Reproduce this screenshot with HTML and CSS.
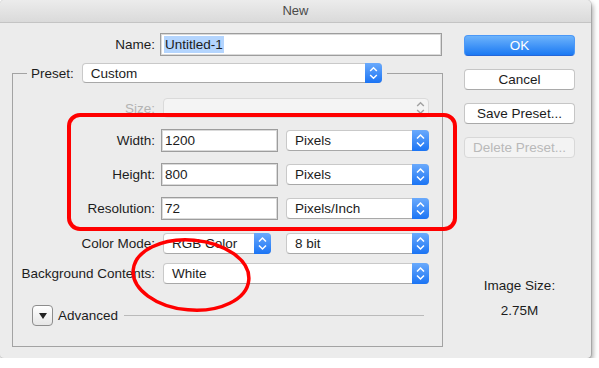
FILE: index.html
```html
<!DOCTYPE html>
<html lang="en">
<head>
  <meta charset="UTF-8">
  <title>New</title>
  <link rel="stylesheet" href="styles.css">
</head>
<body>

  <svg class="defs" width="0" height="0">
    <symbol id="chevrons" viewBox="0 0 16 21">
      <path d="M4.5 8.5 L8 5 L11.5 8.5" fill="none" stroke-width="1.5"/>
      <path d="M4.5 12.5 L8 16 L11.5 12.5" fill="none" stroke-width="1.5"/>
    </symbol>
  </svg>

  <div class="window">
    <div class="titlebar">New</div>

    <div class="content">
      <div class="main">
        <div class="name-row">
          <span class="label">Name:</span>
          <div class="field name-field"><span class="selected">Untitled-1</span></div>
        </div>

        <fieldset class="group">
          <legend>
            <div class="legend-inner">
              <span class="legend-label">Preset:</span>
              <div class="popup preset">
                <span class="text">Custom</span>
                <span class="stepper"><svg><use href="#chevrons"/></svg></span>
              </div>
            </div>
          </legend>

          <div class="row row-size">
            <span class="label disabled">Size:</span>
            <div class="popup long off">
              <span class="text"></span>
              <span class="stepper"><svg><use href="#chevrons"/></svg></span>
            </div>
          </div>

          <div class="row row-dim">
            <span class="label">Width:</span>
            <div class="field num">1200</div>
            <div class="popup unit">
              <span class="text">Pixels</span>
              <span class="stepper"><svg><use href="#chevrons"/></svg></span>
            </div>
          </div>

          <div class="row row-dim">
            <span class="label">Height:</span>
            <div class="field num">800</div>
            <div class="popup unit">
              <span class="text">Pixels</span>
              <span class="stepper"><svg><use href="#chevrons"/></svg></span>
            </div>
          </div>

          <div class="row row-dim">
            <span class="label">Resolution:</span>
            <div class="field num">72</div>
            <div class="popup unit">
              <span class="text">Pixels/Inch</span>
              <span class="stepper"><svg><use href="#chevrons"/></svg></span>
            </div>
          </div>

          <div class="row row-mode">
            <span class="label">Color Mode:</span>
            <div class="popup mode">
              <span class="text">RGB Color</span>
              <span class="stepper"><svg><use href="#chevrons"/></svg></span>
            </div>
            <div class="popup unit">
              <span class="text">8 bit</span>
              <span class="stepper"><svg><use href="#chevrons"/></svg></span>
            </div>
          </div>

          <div class="row row-bg">
            <span class="label">Background Contents:</span>
            <div class="popup long">
              <span class="text">White</span>
              <span class="stepper"><svg><use href="#chevrons"/></svg></span>
            </div>
          </div>

          <div class="row row-adv">
            <span class="disclosure"><span class="triangle"></span></span>
            <span class="adv-label">Advanced</span>
            <span class="rule"></span>
          </div>
        </fieldset>
      </div>

      <div class="side">
        <button class="btn default">OK</button>
        <button class="btn">Cancel</button>
        <button class="btn">Save Preset...</button>
        <button class="btn" disabled>Delete Preset...</button>
        <p class="size-title">Image Size:</p>
        <p class="size-value">2.75M</p>
      </div>
    </div>

    <!-- red markup drawn over the dialog -->
    <div class="mark-box"></div>
    <svg class="mark-ellipse" width="130" height="82" viewBox="0 0 130 82">
      <ellipse cx="64" cy="40" rx="58" ry="35" transform="rotate(5 64 40)"/>
    </svg>
  </div>

</body>
</html>
```

FILE: styles.css
```css
* {
  box-sizing: border-box;
}
body {
  margin: 0;
  background: #fff;
  font-family: "Liberation Sans", Arial, sans-serif;
  font-size: 13.5px;
  color: #1c1c1c;
}
.defs {
  position: absolute;
}
.window {
  position: relative;
  width: 591px;
  height: 358px;
  background: #ececec;
  border-radius: 5px 5px 4px 4px;
  box-shadow: 0 0 0 1px rgba(0,0,0,0.12), 2px 3px 5px rgba(0,0,0,0.35);
}
.titlebar {
  height: 23px;
  line-height: 22px;
  text-align: center;
  font-size: 13px;
  color: #4a4a4a;
  background: linear-gradient(#ececec, #dadada);
  border-bottom: 1px solid #c4c4c4;
  border-radius: 5px 5px 0 0;
}
.content {
  display: flex;
  padding: 10px 0 0 12px;
}
.main {
  width: 431px;
}
.name-row {
  display: flex;
  align-items: center;
  height: 23px;
}
.name-row .label {
  width: 143px;
  margin-right: 5px;
  text-align: right;
}
.field {
  height: 23px;
  display: flex;
  align-items: center;
  padding-left: 3px;
  background: #fff;
  border: 1px solid #9d9d9d;
  box-shadow: inset 0 0 0 1px #dadada;
}
.name-field {
  width: 282px;
}
.selected {
  background: #b4d5fe;
  padding: 1px 1px;
}
.group {
  width: 431px;
  margin: 7px 0 0;
  padding: 15px 0 20px;
  border: 1px solid #a3a3a3;
  min-width: 0;
}
.group legend {
  margin-left: 14px;
  padding: 0 5px 0 4px;
}
.legend-inner {
  display: flex;
  align-items: center;
  height: 20px;
}
.legend-label {
  margin-right: 8px;
}
.row {
  display: flex;
  align-items: center;
}
.row .label {
  width: 142px;
  margin-right: 6px;
  text-align: right;
  white-space: nowrap;
}
.label.disabled {
  color: #b3b3b3;
}
.row-size {
  height: 20px;
}
.row-dim {
  height: 23px;
  margin-top: 11px;
}
.row-mode {
  height: 21px;
  margin-top: 13px;
}
.row-bg {
  height: 21px;
  margin-top: 9px;
}
.row-adv {
  height: 21px;
  margin-top: 21px;
}
.num {
  width: 117px;
}

/* popup buttons */
.popup {
  display: flex;
  align-items: center;
  height: 21px;
  padding-left: 8px;
  background: #fff;
  border: 1px solid #c9c9c9;
  border-bottom-color: #a8a8a8;
  border-radius: 4px;
}
.popup .text {
  flex: 1;
  white-space: nowrap;
}
.stepper {
  width: 17px;
  height: calc(100% + 2px);
  margin: -1px -1px -1px 0;
  background: linear-gradient(#6aaafc, #1b74f4);
  border-radius: 0 4px 4px 0;
  stroke: #fff;
}
.stepper svg {
  display: block;
  width: 17px;
  height: 100%;
}
.preset {
  width: 300px;
  height: 20px;
}
.row .popup {
  margin-left: 2px;
}
.long {
  width: 266px;
}
.off {
  height: 20px;
  background: #f4f4f4;
  border-color: #dadada;
}
.off .stepper {
  background: none;
  stroke: #a2a2a2;
}
.row .unit {
  width: 143px;
  margin-left: 8px;
}
.mode {
  width: 108px;
}
.row-mode .unit {
  margin-left: 15px;
}

/* advanced disclosure */
.disclosure {
  width: 21px;
  height: 21px;
  margin-left: 19px;
  display: flex;
  align-items: center;
  justify-content: center;
  border: 1px solid #8d8d8d;
  border-radius: 4px;
  background: linear-gradient(#ffffff, #e6e6e6);
}
.triangle {
  width: 0;
  height: 0;
  border-left: 4.5px solid transparent;
  border-right: 4.5px solid transparent;
  border-top: 6px solid #222;
  margin-top: 1px;
}
.adv-label {
  margin-left: 5px;
}
.rule {
  flex: 1;
  height: 1px;
  margin: 0 18px 0 6px;
  background: #bababa;
}

/* right column */
.side {
  width: 111px;
  margin-left: 21px;
  padding-top: 2px;
  display: flex;
  flex-direction: column;
}
.btn {
  height: 21px;
  margin: 0 0 13px;
  padding: 0;
  font-family: inherit;
  font-size: 13.5px;
  color: #1c1c1c;
  background: #fff;
  border: 1px solid #c6c6c6;
  border-bottom-color: #a9a9a9;
  border-radius: 4px;
}
.btn.default {
  color: #fff;
  background: linear-gradient(#6db3fb, #1b79f3);
  border-color: #4b98f7;
  border-bottom-color: #2466d8;
}
.btn:disabled {
  color: #b9b9b9;
  background: #f3f3f3;
  border-color: #d8d8d8;
}
.size-title,
.size-value {
  margin: 0;
  line-height: 16px;
  text-align: center;
}
.size-title {
  margin-top: 107px;
}
.size-value {
  margin-top: 9px;
}

/* red annotation */
.mark-box {
  position: absolute;
  left: 67px;
  top: 113px;
  width: 390px;
  height: 118px;
  border: 4px solid #ff0000;
  border-radius: 13px;
}
.mark-ellipse {
  position: absolute;
  left: 127px;
  top: 235px;
}
.mark-ellipse ellipse {
  fill: none;
  stroke: #ff0000;
  stroke-width: 3.5;
}
```
